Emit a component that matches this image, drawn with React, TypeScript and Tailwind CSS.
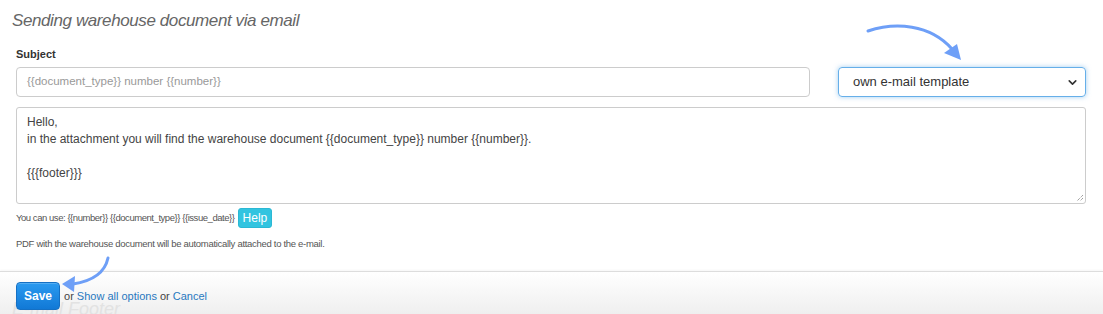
import { ChevronDown } from 'lucide-react'

const FONT = "font-['Liberation_Sans',Arial,sans-serif]"

function ArrowTop() {
  return (
    <svg className="absolute left-[860px] top-[18px]" width="110" height="50" viewBox="0 0 110 50" fill="none">
      <path d="M8 13 C 35 4, 70 6, 92 31" stroke="#6e9ff7" strokeWidth="3" strokeLinecap="round" />
      <path d="M101 42 L84 35 L97 26 Z" fill="#6e9ff7" />
    </svg>
  )
}

function ArrowSave() {
  return (
    <svg className="absolute left-[55px] top-[252px]" width="60" height="45" viewBox="0 0 60 45" fill="none">
      <path d="M53 6 C 50 20, 38 29, 18 32" stroke="#6e9ff7" strokeWidth="3" strokeLinecap="round" />
      <path d="M7 32 L20 24 L19 40 Z" fill="#6e9ff7" />
    </svg>
  )
}

export default function App() {
  return (
    <div className={`relative w-[1103px] h-[314px] overflow-hidden bg-white text-[#333] ${FONT}`}>
      <div className="pl-4 pr-[17px] pt-[9px]">
        <h2 className="-ml-1 text-[17px] leading-[24px] italic tracking-[-0.4px] text-[#666]">
          Sending warehouse document via email
        </h2>

        <label className="block mt-[14px] text-[11px] leading-[14px] font-bold text-[#333]">Subject</label>

        <div className="mt-[6px] flex items-center gap-[28px]">
          <div className="flex-1 h-[30px] rounded-[4px] border border-[#ccc] flex items-center px-[10px] text-[11.5px] text-[#999]">
            {'{{document_type}} number {{number}}'}
          </div>
          <div className="w-[248px] h-[30px] rounded-[4px] border border-[#66afe9] shadow-[0_0_5px_rgba(102,175,233,0.6)] flex items-center justify-between pl-[14px] pr-[6px] text-[13px] text-[#333]">
            <span>own e-mail template</span>
            <ChevronDown className="w-[13px] h-[13px] text-[#333]" strokeWidth={3} />
          </div>
        </div>

        <div className="mt-[10px] h-[97px] rounded-[3px] border border-[#ccc] px-[10px] pt-[6px] text-[12px] leading-[17px] text-[#444] relative">
          <p>Hello,</p>
          <p>in the attachment you will find the warehouse document {'{{document_type}}'} number {'{{number}}'}.</p>
          <p>&nbsp;</p>
          <p>{'{{{footer}}}'}</p>
          <svg className="absolute right-[1px] bottom-[1px]" width="8" height="8" viewBox="0 0 8 8">
            <path d="M7 1 L1 7 M7 4 L4 7" stroke="#777" strokeWidth="1" strokeDasharray="1 1" />
          </svg>
        </div>

        <div className="mt-[4px] flex items-center gap-[3px] text-[#555]">
          <span className="text-[9.5px] tracking-[-0.45px]">
            You can use: {'{{number}}'} {'{{document_type}}'} {'{{issue_date}}'}
          </span>
          <span className="h-[20px] px-[4px] rounded-[3px] bg-[#32c4e0] border border-[#2bb8d4] text-white text-[12px] flex items-center">
            Help
          </span>
        </div>

        <p className="mt-[9px] text-[9.5px] tracking-[-0.3px] leading-[14px] text-[#555]">
          PDF with the warehouse document will be automatically attached to the e-mail.
        </p>
      </div>

      <div className="absolute left-0 right-0 top-[271px] h-[43px] border-t border-[#ddd] bg-gradient-to-b from-white to-[#efefef] shadow-[0_-1px_2px_rgba(0,0,0,0.04)]">
        <span className="absolute left-[12px] top-[24px] text-[18px] italic text-[#e2e2e2]">E-mail Footer</span>
        <div className="relative flex items-center pl-4 pt-[10px] text-[11px] text-[#444]">
          <button className="h-[28px] px-[7px] rounded-[4px] bg-gradient-to-b from-[#2a9af0] to-[#1179d6] border border-[#1570c4] text-white text-[12px] font-bold shadow-[inset_0_1px_0_rgba(255,255,255,0.2)]">
            Save
          </button>
          <span className="ml-[4px]">or</span>
          <a className="ml-[3px] text-[#2878c0]">Show all options</a>
          <span className="ml-[3px]">or</span>
          <a className="ml-[3px] text-[#2878c0]">Cancel</a>
        </div>
      </div>

      <ArrowTop />
      <ArrowSave />
    </div>
  )
}
